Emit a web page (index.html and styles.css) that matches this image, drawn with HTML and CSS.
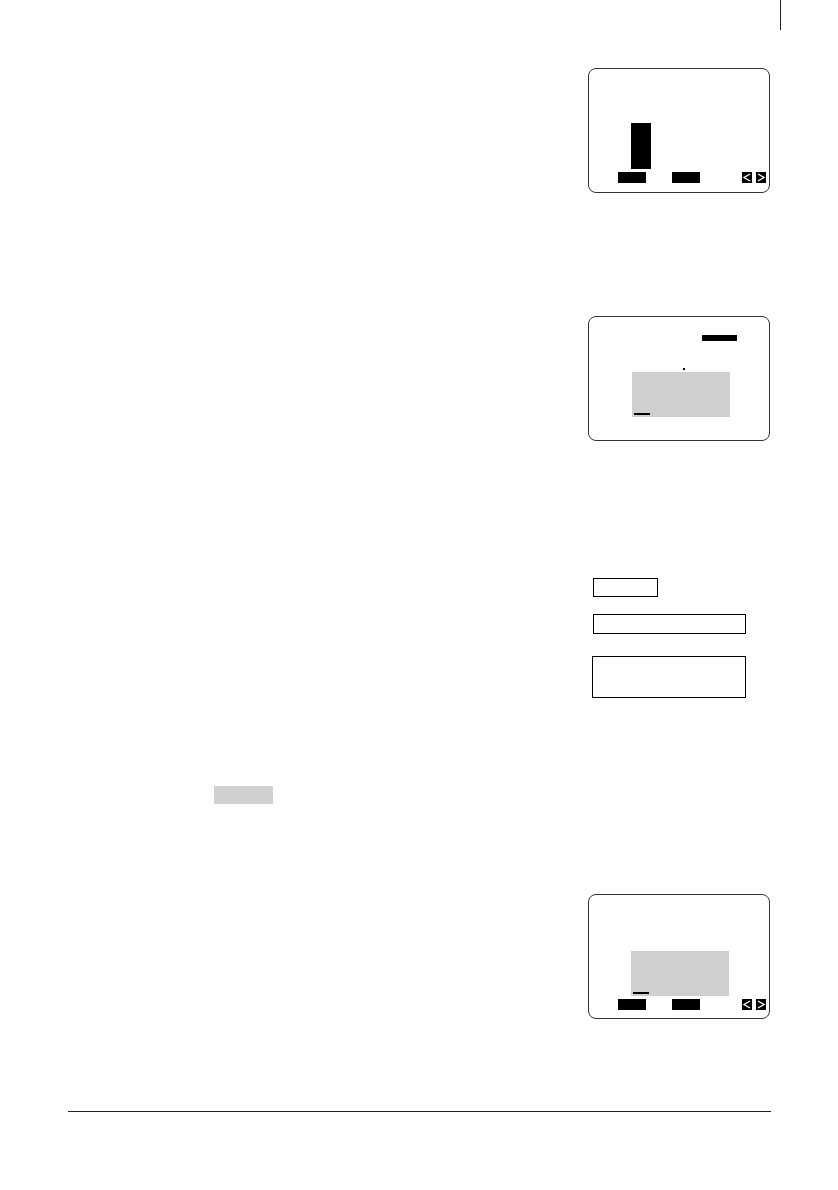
FILE: index.html
```html
<!DOCTYPE html>
<html>
<head>
<meta charset="utf-8">
<link rel="stylesheet" href="styles.css">
</head>
<body>
<div class="page">
  <div class="crop-mark"></div>

  <div class="lcd lcd-first">
    <div class="bar"></div>
    <div class="softkey key-a"></div>
    <div class="softkey key-b"></div>
    <div class="arrow arrow-l"><svg viewBox="0 0 10 11" width="10" height="11"><polyline points="8,2 2,5.5 8,9" fill="none" stroke="#fff" stroke-width="1.3"/></svg></div>
    <div class="arrow arrow-r"><svg viewBox="0 0 10 11" width="10" height="11"><polyline points="2,2 8,5.5 2,9" fill="none" stroke="#fff" stroke-width="1.3"/></svg></div>
  </div>

  <div class="lcd lcd-second">
    <div class="topbar"></div>
    <div class="dot"></div>
    <div class="panel panel-2"><div class="cursor"></div></div>
  </div>

  <div class="fields">
    <div class="field field-short"></div>
    <div class="field field-long"></div>
    <div class="field field-area"></div>
  </div>

  <div class="highlight"></div>

  <div class="lcd lcd-third">
    <div class="panel panel-4"><div class="cursor"></div></div>
    <div class="softkey key-a4"></div>
    <div class="softkey key-b4"></div>
    <div class="arrow arrow-l4"><svg viewBox="0 0 10 11" width="10" height="11"><polyline points="8,2 2,5.5 8,9" fill="none" stroke="#fff" stroke-width="1.3"/></svg></div>
    <div class="arrow arrow-r4"><svg viewBox="0 0 10 11" width="10" height="11"><polyline points="2,2 8,5.5 2,9" fill="none" stroke="#fff" stroke-width="1.3"/></svg></div>
  </div>

  <div class="footer-rule"></div>
</div>
</body>
</html>
```

FILE: styles.css
```css
html, body {
  margin: 0;
  padding: 0;
  background: #fff;
  font-family: "Liberation Sans", Arial, sans-serif;
}

.page {
  width: 838px;
  height: 1190px;
  overflow: hidden;
}

.crop-mark {
  margin-left: 780px;
  width: 1px;
  height: 30px;
  background: #222;
}

.lcd {
  position: relative;
  box-sizing: border-box;
  margin-left: 588px;
  width: 182px;
  height: 125px;
  border: 1.5px solid #333;
  border-radius: 8px;
  background: #fff;
}

.lcd-first { margin-top: 38px; }
.lcd-second { margin-top: 123px; }
.lcd-third { margin-top: 90px; }

.bar {
  position: absolute;
  left: 42px;
  top: 54px;
  width: 20px;
  height: 46px;
  background: #000;
}

.softkey {
  position: absolute;
  top: 103px;
  width: 28px;
  height: 11px;
  background: #000;
}
.key-a { left: 29px; }
.key-b { left: 83px; }
.key-a4 { left: 29px; top: 104px; }
.key-b4 { left: 83px; top: 104px; }

.arrow {
  position: absolute;
  top: 103px;
  width: 10px;
  height: 11px;
  background: #000;
  display: flex;
}
.arrow-l { left: 153px; }
.arrow-r { left: 167px; }
.arrow-l4 { left: 153px; top: 104px; }
.arrow-r4 { left: 167px; top: 104px; }

.topbar {
  position: absolute;
  left: 113px;
  top: 18px;
  width: 35px;
  height: 6px;
  background: #000;
}

.dot {
  position: absolute;
  left: 94px;
  top: 51px;
  width: 2px;
  height: 2px;
  background: #000;
}

.panel {
  position: absolute;
  width: 98px;
  height: 45px;
  background: #cfcfcf;
}
.panel-2 { left: 43px; top: 55px; }
.panel-4 { left: 42px; top: 56px; }

.cursor {
  position: absolute;
  left: 2px;
  top: 41px;
  width: 16px;
  height: 2px;
  background: #000;
}

.fields {
  margin-top: 137px;
  margin-left: 593px;
  display: flex;
  flex-direction: column;
  align-items: flex-start;
}

.field {
  box-sizing: border-box;
  border: 1.5px solid #000;
  background: #fff;
}
.field-short { width: 65px; height: 19px; }
.field-long { width: 153px; height: 20px; margin-top: 17px; }
.field-area { width: 154px; height: 42px; margin-top: 22px; margin-left: -1px; }

.highlight {
  margin-top: 88px;
  margin-left: 214px;
  width: 59px;
  height: 18px;
  background: #d0d0d0;
}

.footer-rule {
  margin-top: 92px;
  margin-left: 68px;
  width: 703px;
  height: 1px;
  background: #222;
}
```
